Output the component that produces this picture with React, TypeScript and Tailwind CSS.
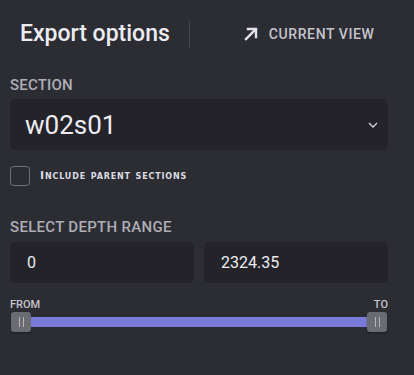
import React from 'react'

function Thumb() {
  return (
    <div className="flex h-5 w-5 shrink-0 items-center justify-center gap-[3px] rounded-[3px] bg-[#6b6b72] shadow-[0_1px_2px_rgba(0,0,0,0.4)]">
      <span className="h-[10px] w-px bg-[#b4b4ba]" />
      <span className="h-[10px] w-px bg-[#b4b4ba]" />
    </div>
  )
}

export default function App() {
  return (
    <div className="h-[375px] w-[414px] bg-[#2c2d33] font-['Roboto',sans-serif] text-[#e8e8ee]">
      <div className="w-[398px] px-[10px]">
        {/* header */}
        <div className="flex h-[68px] items-center">
          <h1 className="ml-[10px] text-[23px] font-medium leading-[28px] text-[#ececf2]">Export options</h1>
          <div className="ml-[19px] h-[27px] w-px bg-[#45464d]" />
          <button className="ml-[53px] flex items-center gap-[10px] text-[14px] font-medium tracking-[0.6px] text-[#c4c4cc]">
            <svg width="16" height="16" viewBox="0 0 16 16" fill="none" stroke="#e4e4ea" strokeWidth="2.4" strokeLinecap="square">
              <path d="M3 13 L12.5 3.5" />
              <path d="M5 3 H13 V11" />
            </svg>
            CURRENT VIEW
          </button>
        </div>

        {/* section */}
        <div className="mt-[8px] text-[15px] font-medium leading-[18px] tracking-[0.2px] text-[#aeaeb6]">SECTION</div>
        <div className="mt-[5px] flex h-[51px] items-center justify-between rounded-[5px] bg-[#232329] pl-[15px] pr-[10px]">
          <span className="text-[26px] leading-[30px] text-[#ececf2]">w02s01</span>
          <svg width="10" height="6" viewBox="0 0 10 6" fill="none" stroke="#d0d0d6" strokeWidth="1.4">
            <path d="M1 1 L5 5 L9 1" />
          </svg>
        </div>

        <label className="mt-[16px] flex items-center gap-[10px]">
          <span className="h-[20px] w-[20px] rounded-[4px] border border-[#74747c]" />
          <span className="text-[11px] font-bold leading-[14px] tracking-[0.85px] text-[#dcdce4] [font-family:'DejaVu_Sans',sans-serif] [font-variant:small-caps]">
            Include parent sections
          </span>
        </label>

        {/* depth range */}
        <div className="mt-[32px] text-[15px] font-medium leading-[18px] tracking-[0.3px] text-[#aeaeb6]">SELECT DEPTH RANGE</div>
        <div className="mt-[6px] grid grid-cols-2 gap-[10px]">
          <div className="flex h-[41px] items-center rounded-[5px] bg-[#232329] pl-[17px] text-[16px] text-[#ececf2]">0</div>
          <div className="flex h-[41px] items-center rounded-[5px] bg-[#232329] pl-[17px] text-[16px] text-[#ececf2]">2324.35</div>
        </div>

        <div className="mt-[15px] flex justify-between text-[11px] font-medium leading-[13px] text-[#c4c4cc]">
          <span>FROM</span>
          <span>TO</span>
        </div>
        <div className="mt-px flex items-center px-px">
          <Thumb />
          <div className="h-[10px] flex-1 bg-[#7a7ad8]" />
          <Thumb />
        </div>
      </div>
    </div>
  )
}
